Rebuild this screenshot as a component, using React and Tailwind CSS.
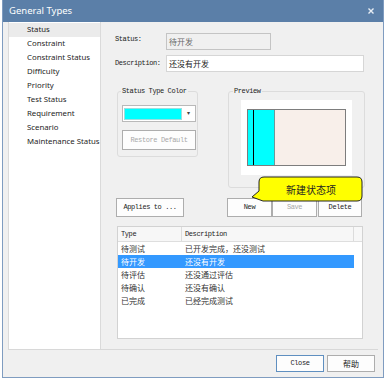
import React from 'react';

const mono = { fontFamily: '"Liberation Mono", monospace' };

const categories = [
  'Status',
  'Constraint',
  'Constraint Status',
  'Difficulty',
  'Priority',
  'Test Status',
  'Requirement',
  'Scenario',
  'Maintenance Status',
];

const rows = [
  ['待测试', '已开发完成，还没测试'],
  ['待开发', '还没有开发'],
  ['待评估', '还没通过评估'],
  ['待确认', '还没有确认'],
  ['已完成', '已经完成测试'],
];

function Btn({ className = '', disabled, children }) {
  return (
    <div
      className={`flex items-center justify-center border border-[#adadad] bg-[#fdfdfd] font-['Liberation_Mono',monospace] text-[7px] tracking-[-0.4px] ${
        disabled ? 'text-[#a8a8a8]' : 'text-[#222]'
      } ${className}`}
    >
      {children}
    </div>
  );
}

export default function App() {
  return (
    <div className="relative w-[385px] h-[381px] bg-white font-['Noto_Sans','Noto_Sans_CJK_SC',sans-serif]">
      <div className="ml-[2px] w-[382px] h-[378px] flex flex-col bg-[#f0f0f0] border-l border-r border-b border-[#7f9cc0]">
        {/* title bar */}
        <div className="h-[22px] shrink-0 bg-[#5b7fa8] flex items-center justify-between pl-[6px] pr-[9px]">
          <span className="text-white text-[9.5px]">General Types</span>
          <svg width="6" height="6" viewBox="0 0 6 6">
            <path d="M0.5 0.5 L5.5 5.5 M5.5 0.5 L0.5 5.5" stroke="#e8eef5" strokeWidth="1.4" />
          </svg>
        </div>

        <div className="flex h-[327px]">
          {/* category list */}
          <div className="ml-[5px] w-[93px] bg-white border-l border-r border-[#dadada] pt-px">
            {categories.map((c, i) => (
              <div
                key={c}
                className={`h-[14px] flex items-center pl-[18px] whitespace-nowrap text-[7.8px] text-[#1e1e1e] ${
                  i === 0 ? 'bg-[#ebebeb]' : ''
                }`}
              >
                {c}
              </div>
            ))}
          </div>

          {/* details */}
          <div className="flex-1 pl-[14px]">
            <div className="mt-[11px] flex items-start h-[17px]">
              <span className="w-[51px] pt-[1px] text-[7px] tracking-[-0.4px] text-[#222]" style={mono}>
                Status:
              </span>
              <div className="w-[105px] h-[17px] border border-[#c4c4c4] bg-[#f0f0f0] flex items-center pl-[2px] text-[8px] text-[#6a6a6a] font-['Noto_Sans_CJK_SC',sans-serif]">
                待开发
              </div>
            </div>
            <div className="mt-[5px] flex items-center h-[17px]">
              <span className="w-[51px] text-[7px] tracking-[-0.4px] text-[#222]" style={mono}>
                Description:
              </span>
              <div className="w-[198px] h-[17px] border border-[#d6d6d6] bg-white flex items-center pl-[2px] text-[8px] text-[#222] font-['Noto_Sans_CJK_SC',sans-serif]">
                还没有开发
              </div>
            </div>

            <div className="mt-[19px] flex items-start">
              {/* status type color */}
              <div className="relative ml-[2px] w-[81px] h-[66px] border border-[#dcdcdc] rounded-[3px] pl-[4px] pt-[13px]">
                <span
                  className="absolute left-[3px] top-[-6px] px-[1px] bg-[#f0f0f0] text-[7px] tracking-[-0.4px] text-[#222] leading-[11px]"
                  style={mono}
                >
                  Status Type Color
                </span>
                <div className="w-[74px] h-[17px] border border-[#b9b9b9] bg-white flex items-center pl-[1px]">
                  <div className="w-[58px] h-[12px] bg-[#00ffff] border border-[#9adede]" />
                  <span className="ml-[5px] text-[6px] text-[#444]">▾</span>
                </div>
                <Btn disabled className="mt-[8px] w-[74px] h-[20px]">
                  Restore Default
                </Btn>
              </div>

              {/* preview */}
              <div className="relative ml-[30px] w-[137px] h-[97px] border border-[#dcdcdc] rounded-[3px] pl-[12px] pt-[8px]">
                <span
                  className="absolute left-[4px] top-[-6px] px-[1px] bg-[#f0f0f0] text-[7px] tracking-[-0.4px] text-[#222] leading-[11px]"
                  style={mono}
                >
                  Preview
                </span>
                <div className="w-[111px] h-[75px] bg-white pl-[6px] pt-[9px]">
                  <div className="w-[99px] h-[57px] border-[1.5px] border-[#7d7d7d] flex bg-[#f8efea]">
                    <div className="w-[5px] bg-[#00ffff]" />
                    <div className="w-px bg-black" />
                    <div className="w-[21px] bg-[#00ffff] border-r border-[#6a9a9a]" />
                  </div>
                </div>
              </div>
            </div>

            <div className="mt-[10px] flex h-[19px]">
              <Btn className="ml-[1px] w-[68px]">Applies to ...</Btn>
              <Btn className="ml-[43px] w-[45px]">New</Btn>
              <Btn disabled className="w-[45px]">Save</Btn>
              <Btn className="ml-px w-[44px]">Delete</Btn>
            </div>

            {/* table */}
            <div className="mt-[9px] ml-[2px] w-[246px] h-[113px] border border-[#d2d2d2] bg-white">
              <div className="flex h-[15px] bg-[#f7f7f7] border-b border-[#dedede] text-[7px] tracking-[-0.4px] text-[#222]" style={mono}>
                <div className="w-[64px] pl-[3px] flex items-center border-r border-[#dcdcdc]">Type</div>
                <div className="w-[172px] pl-[3px] flex items-center border-r border-[#dcdcdc]">Description</div>
                <div className="flex-1" />
              </div>
              {rows.map(([t, d], i) => (
                <div
                  key={t}
                  className={`flex h-[13px] items-center w-[236px] text-[8px] font-['Noto_Sans_CJK_SC',sans-serif] ${
                    i === 1 ? 'bg-[#3399ff] text-white' : 'text-[#333]'
                  }`}
                >
                  <div className="w-[67px] pl-[3px]">{t}</div>
                  <div>{d}</div>
                </div>
              ))}
            </div>
          </div>
        </div>

        <div className="ml-[5px] w-[370px] h-px bg-[#d8d8d8]" />

        <div className="mt-[5px] flex justify-end pr-[8px] gap-[3px]">
          <div className="w-[48px] h-[17px] border border-[#5f8fc0] bg-[#fdfdfd] flex items-center justify-center text-[7px] tracking-[-0.4px] text-[#222]" style={mono}>
            Close
          </div>
          <div className="w-[48px] h-[17px] border border-[#adadad] bg-[#fdfdfd] flex items-center justify-center text-[8px] text-[#222] font-['Noto_Sans_CJK_SC',sans-serif]">
            帮助
          </div>
        </div>
      </div>

      {/* callout */}
      <div className="absolute left-[251px] top-[176px] w-[112px] h-[26px]">
        <svg width="112" height="26" viewBox="0 0 112 26" className="absolute inset-0">
          <path
            d="M13 1 H106 Q111 1 111 6 V20 Q111 25 106 25 H12 L1 21 L8 15 V6 Q8 1 13 1 Z"
            fill="#ffff00"
            stroke="#222"
            strokeWidth="1"
          />
        </svg>
        <span className="absolute left-[8px] right-0 top-0 h-[26px] flex items-center justify-center text-[10px] text-[#222] font-['Noto_Sans_CJK_SC',sans-serif]">
          新建状态项
        </span>
      </div>
    </div>
  );
}
